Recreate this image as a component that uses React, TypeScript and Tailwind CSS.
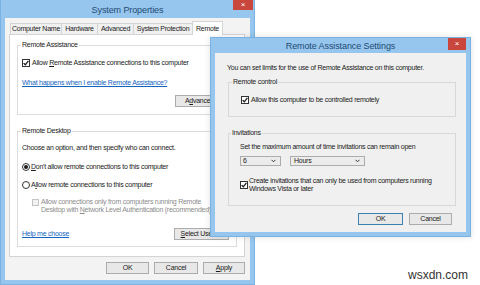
import React from "react";

const Check = () => (
  <div className="w-[8px] h-[8px] border border-[#333] bg-white shrink-0 flex items-center justify-center">
    <svg width="6" height="6" viewBox="0 0 6 6">
      <path d="M0.6 3.1 L2.3 4.8 L5.4 0.9" stroke="#1a1a1a" strokeWidth="1.3" fill="none" />
    </svg>
  </div>
);

const Radio = ({ on }: { on?: boolean }) => (
  <div className="w-[8px] h-[8px] rounded-full border border-[#333] bg-white flex items-center justify-center shrink-0">
    {on && <div className="w-[4px] h-[4px] rounded-full bg-[#1a1a1a]" />}
  </div>
);

const Chev = () => (
  <svg width="5" height="4" viewBox="0 0 5 4">
    <path d="M0.5 0.8 L2.5 2.8 L4.5 0.8" stroke="#333" strokeWidth="1" fill="none" />
  </svg>
);

const Btn = ({ children, cls }: { children: React.ReactNode; cls: string }) => (
  <div className={"h-[12px] border bg-[#e8e8e8] flex items-center justify-center " + cls}>{children}</div>
);

export default function App() {
  return (
    <div className="relative w-[480px] h-[285px] overflow-hidden bg-white font-['Liberation_Sans',Arial,sans-serif] text-[7px] leading-[10px] tracking-[-0.25px] text-[#1a1a1a]">
      {/* System Properties window */}
      <div className="absolute left-0 top-[-2px] w-[255px] h-[287px] bg-[#96c6ee] border border-[#7ab3e2] flex flex-col">
        <div className="relative h-[19px] flex items-center justify-center pt-[2px] shrink-0">
          <span className="text-[9px] tracking-[-0.1px] text-[#234a72]">System Properties</span>
          <div className="absolute right-[1px] top-0 w-[20px] h-[11px] bg-[#c9463d] flex items-center justify-center text-white text-[8px] leading-[8px]">×</div>
        </div>
        <div className="mx-[4px] mb-[4px] flex-1 bg-[#f3f3f3] flex flex-col pl-[4px] pr-[5px] pt-[3px]">
          <div className="flex items-end h-[13px] ml-[1px]">
            <div className="w-[52px] h-[11px] border-l border-t border-r border-[#d4d4d4] bg-[#f0f0f0] flex items-center justify-center">Computer Name</div>
            <div className="w-[37px] h-[11px] -ml-[1px] border-l border-t border-r border-[#d4d4d4] bg-[#f0f0f0] flex items-center justify-center">Hardware</div>
            <div className="w-[37px] h-[11px] -ml-[1px] border-l border-t border-r border-[#d4d4d4] bg-[#f0f0f0] flex items-center justify-center">Advanced</div>
            <div className="w-[60px] h-[11px] -ml-[1px] border-l border-t border-r border-[#d4d4d4] bg-[#f0f0f0] flex items-center justify-center">System Protection</div>
            <div className="relative z-10 w-[31px] h-[14px] -ml-[1px] -mb-[1px] border-l border-t border-r border-[#d4d4d4] bg-white flex items-center justify-center">Remote</div>
          </div>
          <div className="h-[223px] border border-[#d4d4d4] bg-white px-[7px] pt-[5px]">
            <fieldset className="border border-[#dcdcdc] pl-[4px] pr-[7px] pb-[7px]">
              <legend className="px-[1px] -ml-[1px] leading-[10px]">Remote Assistance</legend>
              <div className="flex items-center gap-[2px] mt-[8px]">
                <Check />
                <span>Allow <u>R</u>emote Assistance connections to this computer</span>
              </div>
              <div className="mt-[10px] text-[#1565c0] underline">What happens when I enable Remote Assistance?</div>
              <div className="flex justify-end mt-[7px]">
                <Btn cls="w-[54px] border-[#acacac]">A<u>d</u>vanced...</Btn>
              </div>
            </fieldset>
            <fieldset className="mt-[11px] border border-[#dcdcdc] pl-[4px] pr-[7px] pb-[6px]">
              <legend className="px-[1px] -ml-[1px] leading-[10px]">Remote Desktop</legend>
              <div className="mt-[7px]">Choose an option, and then specify who can connect.</div>
              <div className="flex items-center gap-[1px] mt-[9px]">
                <Radio on />
                <span><u>D</u>on't allow remote connections to this computer</span>
              </div>
              <div className="flex items-center gap-[1px] mt-[8px]">
                <Radio />
                <span>A<u>l</u>low remote connections to this computer</span>
              </div>
              <div className="flex items-start gap-[2px] mt-[8px] ml-[10px] text-[#8c8c8c] leading-[8px]">
                <div className="w-[7px] h-[7px] mt-[1px] border border-[#c4c4c4] bg-[#f2f2f2] shrink-0" />
                <div>
                  <div>Allow connections only from computers running Remote</div>
                  <div>Desktop with <u>N</u>etwork Level Authentication (recommended)</div>
                </div>
              </div>
              <div className="flex items-center justify-between mt-[14px]">
                <span className="text-[#1565c0] underline">Help me choose</span>
                <Btn cls="w-[55px] border-[#acacac]"><u>S</u>elect Users...</Btn>
              </div>
            </fieldset>
          </div>
          <div className="flex justify-end gap-[5px] mt-[5px]">
            <Btn cls="w-[43px] border-[#acacac]">OK</Btn>
            <Btn cls="w-[44px] border-[#acacac]">Cancel</Btn>
            <Btn cls="w-[42px] border-[#acacac]"><u>A</u>pply</Btn>
          </div>
        </div>
      </div>

      {/* Remote Assistance Settings window */}
      <div className="absolute left-[210px] top-[37px] w-[261px] h-[200px] bg-[#96c6ee] border border-[#7ab3e2] flex flex-col shadow-[0_0_6px_rgba(0,0,0,0.12)]">
        <div className="relative h-[15px] flex items-center justify-center shrink-0">
          <span className="text-[9px] tracking-[-0.1px] text-[#234a72]">Remote Assistance Settings</span>
          <div className="absolute right-[4px] top-0 w-[18px] h-[12px] bg-[#c9463d] flex items-center justify-center text-white text-[8px] leading-[8px]">×</div>
        </div>
        <div className="mx-[4px] mb-[4px] flex-1 bg-[#f0f0f0] pl-[12px] pr-[10px] pt-[10px]">
          <div>You can set limits for the use of Remote Assistance on this computer.</div>
          <fieldset className="mt-[4px] ml-[1px] border border-[#d8d8d8] pl-[4px] pb-[11px]">
            <legend className="px-[1px] -ml-[1px] leading-[10px]">Remote control</legend>
            <div className="flex items-center gap-[2px] mt-[8px] ml-[8px]">
              <Check />
              <span>Allow this computer to be controlled remotely</span>
            </div>
          </fieldset>
          <fieldset className="mt-[11px] ml-[1px] border border-[#d8d8d8] pl-[3px] pb-[12px]">
            <legend className="px-[1px] -ml-[1px] leading-[10px]">Invitations</legend>
            <div className="ml-[8px]">
              <div className="mt-[4px]">Set the maximum amount of time invitations can remain open</div>
              <div className="flex gap-[9px] mt-[4px]">
                <div className="w-[41px] h-[10px] border border-[#acacac] bg-[#ececec] flex items-center justify-between pl-[2px] pr-[4px]">
                  <span>6</span>
                  <Chev />
                </div>
                <div className="w-[75px] h-[10px] border border-[#acacac] bg-[#ececec] flex items-center justify-between pl-[3px] pr-[4px]">
                  <span>Hours</span>
                  <Chev />
                </div>
              </div>
              <div className="flex items-center gap-[1px] mt-[11px] leading-[8px]">
                <Check />
                <div>
                  <div>Create invitations that can only be used from computers running</div>
                  <div>Windows Vista or later</div>
                </div>
              </div>
            </div>
          </fieldset>
          <div className="flex justify-end gap-[6px] mt-[7px] mr-[4px]">
            <Btn cls="w-[45px] border-[#3c7fb1]">OK</Btn>
            <Btn cls="w-[43px] border-[#acacac]">Cancel</Btn>
          </div>
        </div>
      </div>

      <div className="absolute right-[12px] top-[267px] text-[12px] leading-[16px] tracking-normal text-[#333]">wsxdn.com</div>
    </div>
  );
}
